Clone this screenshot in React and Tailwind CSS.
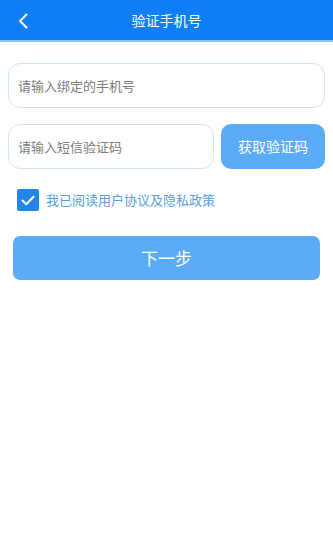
export default function App() {
  return (
    <div
      className="w-[333px] h-[550px] bg-white"
      style={{ fontFamily: '"Noto Sans CJK SC", "Noto Sans", sans-serif' }}
    >
      {/* Header */}
      <div className="h-[42px] bg-[#0f7ef7] border-b-2 border-[#8cc4fb] relative flex items-center justify-center">
        <button className="absolute left-[15px] top-[11px] w-[16px] h-[20px] flex items-center justify-center">
          <svg width="10" height="16" viewBox="0 0 10 16" fill="none">
            <path d="M8.5 1.5L2 8l6.5 6.5" stroke="white" strokeWidth="2" strokeLinecap="round" strokeLinejoin="round" />
          </svg>
        </button>
        <span className="text-white text-[14px] font-normal leading-none">验证手机号</span>
      </div>

      <div className="px-2 pt-[21px]">
        <div className="h-[45px] rounded-[12px] border border-[#d3e3ef] flex items-center px-[9px]">
          <span className="text-[13px] text-[#7d7d7d]">请输入绑定的手机号</span>
        </div>

        <div className="flex gap-[7px] mt-[16px]">
          <div className="flex-1 h-[45px] rounded-[12px] border border-[#d3e3ef] flex items-center px-[9px]">
            <span className="text-[13px] text-[#7d7d7d]">请输入短信验证码</span>
          </div>
          <div className="w-[104px] h-[45px] rounded-[10px] bg-[#5aacf6] flex items-center justify-center">
            <span className="text-[14px] text-white">获取验证码</span>
          </div>
        </div>

        <div className="flex items-center mt-[20px] ml-[9px]">
          <div className="w-[22px] h-[22px] rounded-[2px] bg-[#2384ea] flex items-center justify-center">
            <svg width="14" height="11" viewBox="0 0 14 11" fill="none">
              <path d="M1.5 5.5l3.8 3.8L12.5 1.8" stroke="white" strokeWidth="2" strokeLinecap="round" strokeLinejoin="round" />
            </svg>
          </div>
          <span className="ml-[7px] text-[13px] text-[#5a9fdc]">我已阅读用户协议及隐私政策</span>
        </div>

        <div className="mx-[5px] mt-[25px] h-[44px] rounded-[7px] bg-[#5aacf6] flex items-center justify-center">
          <span className="text-[17px] text-white">下一步</span>
        </div>
      </div>
    </div>
  );
}
